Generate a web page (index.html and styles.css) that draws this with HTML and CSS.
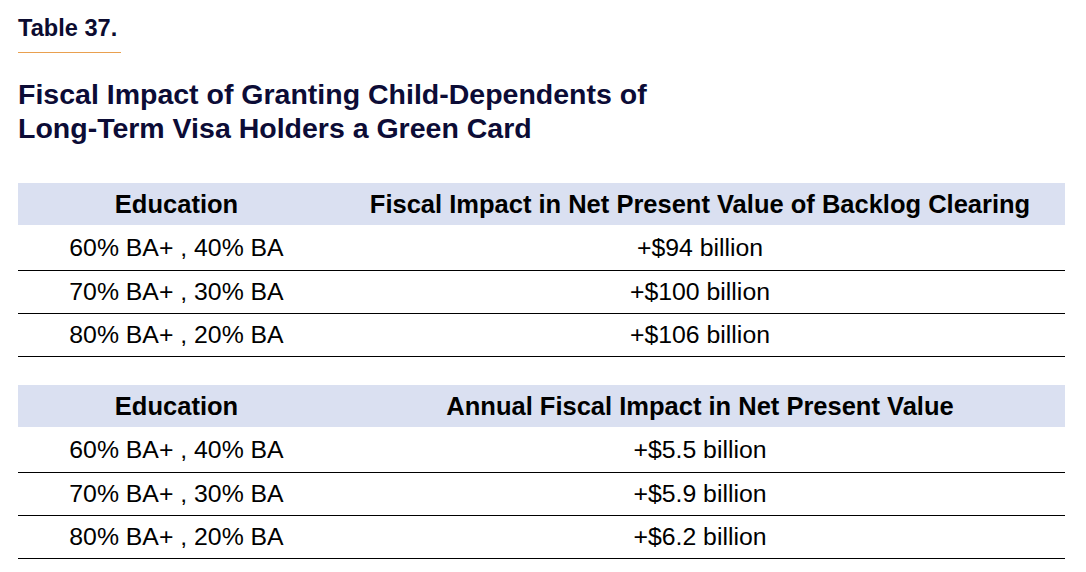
FILE: index.html
```html
<!DOCTYPE html>
<html>
<head>
<meta charset="utf-8">
<link rel="stylesheet" href="styles.css">
</head>
<body>
<div class="page">
  <div class="label">Table 37.</div>
  <div class="rule"></div>
  <h1 class="title">Fiscal Impact of Granting Child-Dependents of<br>Long-Term Visa Holders a Green Card</h1>
  <table class="data first">
    <colgroup><col class="c1"><col class="c2"></colgroup>
    <thead><tr><th>Education</th><th>Fiscal Impact in Net Present Value of Backlog Clearing</th></tr></thead>
    <tbody>
      <tr class="r1"><td>60% BA+ , 40% BA</td><td>+$94 billion</td></tr>
      <tr><td>70% BA+ , 30% BA</td><td>+$100 billion</td></tr>
      <tr><td>80% BA+ , 20% BA</td><td>+$106 billion</td></tr>
    </tbody>
  </table>
  <table class="data second">
    <colgroup><col class="c1"><col class="c2"></colgroup>
    <thead><tr><th>Education</th><th>Annual Fiscal Impact in Net Present Value</th></tr></thead>
    <tbody>
      <tr class="r1"><td>60% BA+ , 40% BA</td><td>+$5.5 billion</td></tr>
      <tr><td>70% BA+ , 30% BA</td><td>+$5.9 billion</td></tr>
      <tr><td>80% BA+ , 20% BA</td><td>+$6.2 billion</td></tr>
    </tbody>
  </table>
</div>
</body>
</html>
```
FILE: styles.css
```css
html, body {
  margin: 0;
  padding: 0;
  background: #ffffff;
}
.page {
  display: flex;
  flex-direction: column;
  align-items: flex-start;
  padding: 14px 21px 0 18px;
  font-family: "Liberation Sans", Arial, sans-serif;
  color: #000;
}
.label {
  font-size: 23.6px;
  font-weight: bold;
  line-height: 28px;
  color: #0c0c30;
}
.rule {
  width: 103px;
  height: 1px;
  background: #e9a04f;
  margin-top: 10px;
}
.title {
  margin: 24px 0 0 0;
  font-size: 28.5px;
  line-height: 34px;
  font-weight: bold;
  color: #0c0c36;
}
.data {
  width: 1047px;
  border-collapse: collapse;
  font-size: 24.8px;
}
.data.first {
  margin-top: 38px;
}
.data.second {
  margin-top: 28px;
}
.c1 { width: 317px; }
.data th {
  background: #dae0f1;
  height: 42px;
  padding: 0;
  font-size: 25.5px;
  font-weight: bold;
  text-align: center;
  vertical-align: middle;
}
.data td {
  height: 42px;
  padding: 0;
  text-align: center;
  vertical-align: middle;
  border-bottom: 1.5px solid #000;
}
.data tr.r1 td {
  height: 45px;
}
```
